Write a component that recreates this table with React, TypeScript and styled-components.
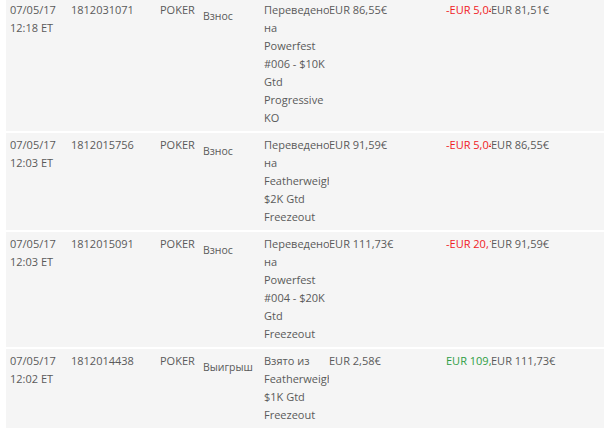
import styled, { createGlobalStyle } from "styled-components";

const GlobalStyle = createGlobalStyle`
  body {
    margin: 0;
    background: #ffffff;
    font-family: "Open Sans", "DejaVu Sans", sans-serif;
    overflow: hidden;
  }
`;

const List = styled.div`
  display: flex;
  flex-direction: column;
  gap: 2px;
  margin: -2px 6px 0;
`;

const Row = styled.div`
  display: grid;
  grid-template-columns: 61px 89px 43px 61px 65px 117px 45px 1fr;
  align-items: start;
  padding: 3px 0 4px 4px;
  background: #f5f5f5;
  color: #5a5a5a;
  font-size: 11px;
  line-height: 18px;
`;

const Cell = styled.div`
  white-space: nowrap;
  overflow: hidden;
`;

const TypeCell = styled.div`
  font-size: 10.5px;
  padding-top: 6px;
  white-space: nowrap;
`;

const Description = styled.div`
  overflow: hidden;
  white-space: normal;
`;

const Change = styled.div<{ $positive?: boolean }>`
  white-space: nowrap;
  overflow: hidden;
  color: ${(p) => (p.$positive ? "#2f9e44" : "#f0211f")};
`;

type Transaction = {
  date: string;
  time: string;
  id: string;
  game: string;
  kind: string;
  lines: string[];
  amount: string;
  change: string;
  positive?: boolean;
  balance: string;
};

const transactions: Transaction[] = [
  {
    date: "07/05/17",
    time: "12:18 ET",
    id: "1812031071",
    game: "POKER",
    kind: "Взнос",
    lines: ["Переведено", "на", "Powerfest", "#006 - $10K", "Gtd", "Progressive", "KO"],
    amount: "EUR 86,55€",
    change: "-EUR 5,04€",
    balance: "EUR 81,51€",
  },
  {
    date: "07/05/17",
    time: "12:03 ET",
    id: "1812015756",
    game: "POKER",
    kind: "Взнос",
    lines: ["Переведено", "на", "Featherweight", "$2K Gtd", "Freezeout"],
    amount: "EUR 91,59€",
    change: "-EUR 5,04€",
    balance: "EUR 86,55€",
  },
  {
    date: "07/05/17",
    time: "12:03 ET",
    id: "1812015091",
    game: "POKER",
    kind: "Взнос",
    lines: ["Переведено", "на", "Powerfest", "#004 - $20K", "Gtd", "Freezeout"],
    amount: "EUR 111,73€",
    change: "-EUR 20,14€",
    balance: "EUR 91,59€",
  },
  {
    date: "07/05/17",
    time: "12:02 ET",
    id: "1812014438",
    game: "POKER",
    kind: "Выигрыш",
    lines: ["Взято из", "Featherweight", "$1K Gtd", "Freezeout"],
    amount: "EUR 2,58€",
    change: "EUR 109,15€",
    positive: true,
    balance: "EUR 111,73€",
  },
];

const App = () => {
  return (
    <>
      <GlobalStyle />
      <List>
        {transactions.map((t) => (
          <Row key={t.id}>
            <Cell>
              {t.date}
              <br />
              {t.time}
            </Cell>
            <Cell>{t.id}</Cell>
            <Cell>{t.game}</Cell>
            <TypeCell>{t.kind}</TypeCell>
            <Description>
              {t.lines.map((line, i) => (
                <div key={i}>{line}</div>
              ))}
            </Description>
            <Cell>{t.amount}</Cell>
            <Change $positive={t.positive}>{t.change}</Change>
            <Cell>{t.balance}</Cell>
          </Row>
        ))}
      </List>
    </>
  );
};

export default App;
